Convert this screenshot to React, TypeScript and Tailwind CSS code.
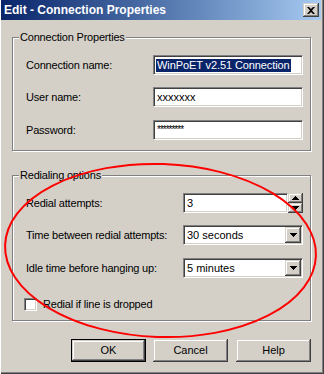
const font = { fontFamily: '"Liberation Sans", Arial, sans-serif' };

const Sunken = ({ className = '', children }: { className?: string; children?: React.ReactNode }) => (
  <div
    className={`shrink-0 bg-white border border-t-[#808080] border-l-[#808080] border-b-white border-r-white shadow-[inset_1px_1px_0_#404040,inset_-1px_-1px_0_#d4d0c8] ${className}`}
  >
    {children}
  </div>
);

const Arrow = ({ up = false }: { up?: boolean }) => (
  <svg width="7" height="4" viewBox="0 0 7 4" className="block">
    <path d={up ? 'M3 0h1v1h1v1h1v1h1v1H0V3h1V2h1V1h1z' : 'M0 0h7v1H6v1H5v1H4v1H3V3H2V2H1V1H0z'} fill="#000" />
  </svg>
);

const SmallButton = ({ className = '', children }: { className?: string; children?: React.ReactNode }) => (
  <div
    className={`shrink-0 bg-[#d4d0c8] flex items-center justify-center shadow-[inset_-1px_-1px_0_#404040,inset_1px_1px_0_#d4d0c8,inset_-2px_-2px_0_#808080,inset_2px_2px_0_#fff] ${className}`}
  >
    {children}
  </div>
);

const Combo = ({ value }: { value: string }) => (
  <Sunken className="w-[120px] h-[20px] flex items-center">
    <span className="flex-1 pl-[3px] text-[11px] leading-none text-black whitespace-nowrap">{value}</span>
    <SmallButton className="w-[16px] h-[16px] mr-[1px]">
      <Arrow />
    </SmallButton>
  </Sunken>
);

const Group = ({ title, className = '', children }: { title: string; className?: string; children: React.ReactNode }) => (
  <div
    className={`relative w-[299px] border border-[#808080] shadow-[inset_1px_1px_0_#fff,1px_1px_0_#fff] ${className}`}
  >
    <span className="absolute left-[6px] top-[-8px] px-[1px] bg-[#d4d0c8] text-[11px] leading-[14px] tracking-[-0.2px] text-black whitespace-nowrap">
      {title}
    </span>
    {children}
  </div>
);

const Row = ({ label, labelW, children, className = '' }: { label: string; labelW: string; children: React.ReactNode; className?: string }) => (
  <div className={`flex items-center ${className}`}>
    <span className={`${labelW} shrink-0 whitespace-nowrap text-[11px] leading-none tracking-[-0.2px] text-black`}>{label}</span>
    {children}
  </div>
);

const Button = ({ label, isDefault = false, className = '' }: { label: string; isDefault?: boolean; className?: string }) => (
  <div className={`w-[75px] h-[23px] ${isDefault ? 'border border-black' : ''} ${className}`}>
    <SmallButton className="w-full h-full text-[11px] text-black">{label}</SmallButton>
  </div>
);

export default function App() {
  return (
    <div
      className="relative w-[324px] h-[374px] bg-[#d4d0c8] overflow-hidden shadow-[inset_1px_0_0_#fff,inset_-1px_-1px_0_#404040,inset_-2px_-2px_0_#808080]"
      style={font}
    >
      {/* Title bar */}
      <div className="ml-[1px] w-[320px] h-[20px] flex items-center bg-gradient-to-r from-[#0a246a] to-[#a6caf0]">
        <span className="ml-[3px] flex-1 text-white font-bold text-[12px] leading-none whitespace-nowrap">Edit - Connection Properties</span>
        <SmallButton className="w-[16px] h-[14px] mr-[2px]">
          <svg width="8" height="7" viewBox="0 0 8 7">
            <path d="M0 0h2l2 2 2-2h2L5 3.5 8 7H6L4 5 2 7H0l3-3.5z" fill="#000" />
          </svg>
        </SmallButton>
      </div>

      <Group title="Connection Properties" className="ml-[12px] mt-[17px] pt-[17px] pb-[10px] pl-[13px]">
        <Row label="Connection name:" labelW="w-[127px]">
          <Sunken className="w-[150px] h-[20px] flex items-center pl-[2px]">
            <span className="bg-[#0a246a] text-white text-[11px] leading-[13px] tracking-[-0.1px] px-[1px] whitespace-nowrap">WinPoET v2.51 Connection</span>
          </Sunken>
        </Row>
        <Row label="User name:" labelW="w-[127px]" className="mt-[12px]">
          <Sunken className="w-[150px] h-[20px] flex items-center pl-[3px]">
            <span className="text-[11px] leading-none text-black">xxxxxxx</span>
          </Sunken>
        </Row>
        <Row label="Password:" labelW="w-[127px]" className="mt-[13px]">
          <Sunken className="w-[150px] h-[20px] flex items-center pl-[3px]">
            <span className="text-[10px] leading-none text-black tracking-[-1px]">*********</span>
          </Sunken>
        </Row>
      </Group>

      <Group title="Redialing options" className="ml-[12px] mt-[24px] pt-[17px] pb-[9px] pl-[13px]">
        <Row label="Redial attempts:" labelW="w-[157px]">
          <Sunken className="w-[105px] h-[20px] flex items-center pl-[3px]">
            <span className="text-[11px] leading-none text-black">3</span>
          </Sunken>
          <div className="flex flex-col">
            <SmallButton className="w-[15px] h-[10px]">
              <Arrow up />
            </SmallButton>
            <SmallButton className="w-[15px] h-[10px]">
              <Arrow />
            </SmallButton>
          </div>
        </Row>
        <Row label="Time between redial attempts:" labelW="w-[157px]" className="mt-[12px]">
          <Combo value="30 seconds" />
        </Row>
        <Row label="Idle time before hanging up:" labelW="w-[157px]" className="mt-[13px]">
          <Combo value="5 minutes" />
        </Row>
        <div className="mt-[20px] ml-[-2px] flex items-center">
          <Sunken className="w-[13px] h-[13px]" />
          <span className="ml-[6px] text-[11px] leading-none tracking-[-0.2px] text-black whitespace-nowrap">Redial if line is dropped</span>
        </div>
      </Group>

      <div className="mt-[18px] flex">
        <Button label="OK" isDefault className="ml-[71px]" />
        <Button label="Cancel" className="ml-[7px]" />
        <Button label="Help" className="ml-[8px]" />
      </div>

      {/* Red annotation ellipse */}
      <svg className="absolute inset-0 pointer-events-none" width="324" height="374" viewBox="0 0 324 374">
        <ellipse cx="160.5" cy="250.5" rx="155.5" ry="86.5" fill="none" stroke="#ff0000" strokeWidth="2" transform="rotate(2 160.5 250.5)" />
      </svg>
    </div>
  );
}
